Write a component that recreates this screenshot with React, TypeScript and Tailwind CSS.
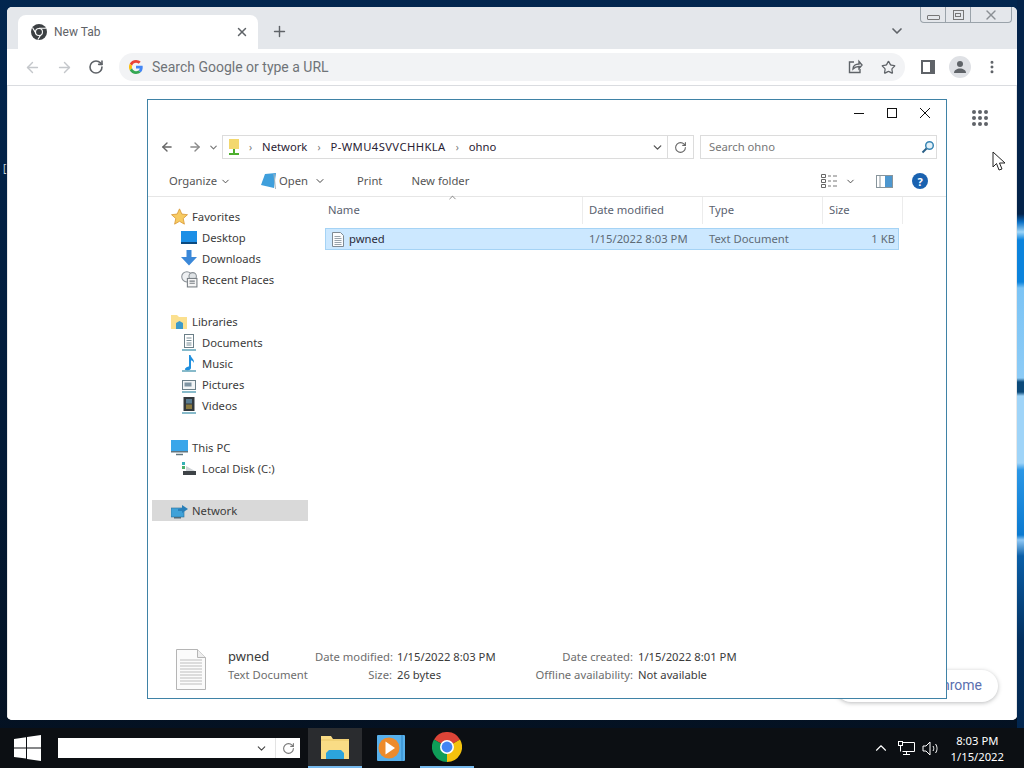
import { ArrowLeft, ArrowRight, ChevronDown, ChevronUp, MoreVertical, Plus, RotateCw, Star, X } from "lucide-react";
import type { ReactNode } from "react";

const ChromeLogo = ({ size }: { size: number }) => (
  <svg width={size} height={size} viewBox="0 0 30 30">
    <path d="M15 15 L2 7.5 A15 15 0 0 1 28 7.5 Z" fill="#db4437" />
    <path d="M15 15 L28 7.5 A15 15 0 0 1 15 30 Z" fill="#f4c20d" />
    <path d="M15 15 L15 30 A15 15 0 0 1 2 7.5 Z" fill="#0f9d58" />
    <circle cx="15" cy="15" r="7" fill="#fff" />
    <circle cx="15" cy="15" r="5.4" fill="#4285f4" />
  </svg>
);

const GrayChrome = () => (
  <svg width="16" height="16" viewBox="0 0 30 30">
    <circle cx="15" cy="15" r="15" fill="#3c4043" />
    <path d="M15 8 H28 M10 19 L3 7 M19 19 L13 29" stroke="#fff" strokeWidth="2" />
    <circle cx="15" cy="15" r="7.5" fill="#fff" />
    <circle cx="15" cy="15" r="5.5" fill="#3c4043" />
  </svg>
);

const GoogleG = () => (
  <svg width="14" height="14" viewBox="0 0 48 48">
    <path fill="#ea4335" d="M24 9.5c3.5 0 6.700 1.200 9.200 3.600l6.900-6.900C35.900 2.400 30.400 0 24 0 14.600 0 6.500 5.400 2.600 13.200l8 6.200C12.500 13.700 17.800 9.500 24 9.500z" />
    <path fill="#4285f4" d="M47 24.500c0-1.600-.2-3.100-.4-4.500H24v9h12.900c-.6 3-2.200 5.500-4.700 7.200l7.700 6C44.400 38 47 31.800 47 24.500z" />
    <path fill="#fbbc05" d="M10.500 28.600c-.5-1.400-.8-3-.8-4.600s.3-3.200.8-4.600l-8-6.200C.9 16.500 0 20.100 0 24s.9 7.500 2.600 10.800l7.900-6.200z" />
    <path fill="#34a853" d="M24 48c6.500 0 11.900-2.100 15.900-5.800l-7.700-6c-2.100 1.400-4.900 2.300-8.200 2.300-6.200 0-11.500-4.200-13.400-9.900l-8 6.200C6.500 42.600 14.600 48 24 48z" />
  </svg>
);

const NavIcon = ({ kind }: { kind: string }) => {
  switch (kind) {
    case "star":
      return (
        <svg width="17" height="17" viewBox="0 0 16 16">
          <path d="M8 .8l2.200 4.900 5.300.6-4 3.600 1.100 5.300L8 12.500l-4.600 2.700 1.100-5.300-4-3.600 5.300-.6z" fill="#f7cb62" stroke="#d99b3a" strokeWidth=".8" />
        </svg>
      );
    case "desktop":
      return (
        <svg width="16" height="16" viewBox="0 0 16 16">
          <rect x="0" y="1" width="16" height="12" fill="#1c8fe6" />
          <rect x="0" y="12" width="16" height="2" fill="#0b4a80" />
        </svg>
      );
    case "down":
      return (
        <svg width="16" height="17" viewBox="0 0 16 17">
          <path d="M5.500 0h5v7H16l-8 8.500L0 7h5.500z" fill="#3b88d8" />
        </svg>
      );
    case "recent":
      return (
        <svg width="17" height="17" viewBox="0 0 16 16">
          <circle cx="5.500" cy="5.500" r="4.800" fill="#eef0f2" stroke="#8a9096" />
          <circle cx="11" cy="5" r="3.500" fill="#dfe3e6" stroke="#8a9096" />
          <rect x="6" y="7" width="9" height="8" fill="#f5f5f5" stroke="#777d83" />
          <path d="M8 9.500h5M8 11.500h5" stroke="#777d83" />
        </svg>
      );
    case "lib":
      return (
        <svg width="17" height="16" viewBox="0 0 17 16">
          <path d="M0 1h6l2 2h8v12H0z" fill="#fbe08f" />
          <path d="M5 9l3.500-2L12 9v6H5z" fill="#3d9ac9" />
        </svg>
      );
    case "doc":
      return (
        <svg width="16" height="17" viewBox="0 0 16 17">
          <rect x="3.500" y=".5" width="9" height="13" fill="#fff" stroke="#6b7f88" />
          <path d="M5.500 4h5M5.500 6.500h5M5.500 9h5M5.500 11h5" stroke="#7b8f98" />
          <path d="M1 16h14" stroke="#5fa3b8" strokeWidth="1.500" />
        </svg>
      );
    case "music":
      return (
        <svg width="16" height="17" viewBox="0 0 16 17">
          <path d="M8 0h1.500c.5 3 4 4 3.500 8-1-2-2-2.500-3-2.500V13c0 2-3.500 3-5.500 2S6 11.500 8 11.500z" fill="#1f8fde" />
          <path d="M1 16h14" stroke="#5fa3b8" strokeWidth="1.500" />
        </svg>
      );
    case "pic":
      return (
        <svg width="16" height="17" viewBox="0 0 16 17">
          <rect x="1.500" y="4.500" width="13" height="9" fill="#f2f5f6" stroke="#6b7f88" />
          <rect x="3.500" y="6.500" width="7" height="4" fill="#7f95a3" />
          <path d="M1 16h14" stroke="#5fa3b8" strokeWidth="1.500" />
        </svg>
      );
    case "vid":
      return (
        <svg width="16" height="17" viewBox="0 0 16 17">
          <rect x="2.500" y="0" width="11" height="14" fill="#33383c" />
          <rect x="5" y="2" width="6" height="4.500" fill="#5a7d92" />
          <rect x="5" y="7.500" width="6" height="4.500" fill="#8a7a40" />
          <path d="M1 16h14" stroke="#5fa3b8" strokeWidth="1.500" />
        </svg>
      );
    case "pc":
      return (
        <svg width="17" height="16" viewBox="0 0 17 16">
          <rect x="0" y="0" width="17" height="11" fill="#3aa6ea" />
          <rect x="0" y="11" width="17" height="1.500" fill="#60757f" />
          <path d="M5 14.500h7" stroke="#60757f" strokeWidth="1.500" />
        </svg>
      );
    case "disk":
      return (
        <svg width="16" height="16" viewBox="0 0 16 16">
          <rect x="1" y="1" width="3" height="3" fill="#35b1b5" />
          <rect x="1" y="5" width="3" height="3" fill="#4caf6a" />
          <path d="M5 5l9 5H5z" fill="#cfd4d7" />
          <rect x="2" y="10" width="13" height="4" fill="#3e4347" />
        </svg>
      );
    default:
      return (
        <svg width="17" height="16" viewBox="0 0 17 16">
          <rect x="0" y="5" width="13" height="9" fill="#3fa1d8" stroke="#2a6f99" strokeWidth=".6" />
          <path d="M7 6l4-1V2l6 4-6 4V8H7z" fill="#2a7fb8" />
          <rect x="3" y="14" width="7" height="1.500" fill="#546a76" />
        </svg>
      );
  }
};

const NavGroup = ({ items }: { items: { label: string; icon: string; sub?: boolean; active?: boolean }[] }) => (
  <div className="flex flex-col">
    {items.map((item) => (
      <div
        key={item.label}
        className={`flex h-[21px] items-center ${item.sub ? "pl-[29px]" : "pl-[19px]"} ${item.active ? "bg-[#d9d9d9]" : ""}`}
      >
        <span className="flex w-[21px] shrink-0 items-center">
          <NavIcon kind={item.icon} />
        </span>
        <span className="whitespace-nowrap pt-[1px] text-[11.25px] text-[#3b3b3b]">{item.label}</span>
      </div>
    ))}
  </div>
);

const Crumb = ({ children, className }: { children: ReactNode; className?: string }) => (
  <>
    <span className="text-[10px] leading-none text-[#777]">›</span>
    <span className={`whitespace-nowrap text-[11.25px] text-[#2a2233] ${className ?? ""}`}>{children}</span>
  </>
);

const HeaderCell = ({ width, children, pad }: { width: string; children?: ReactNode; pad: string }) => (
  <div className={`${width} ${pad} flex h-[27px] shrink-0 items-center border-r border-[#ececec] text-[11.25px] text-[#5a6270]`}>
    {children}
  </div>
);

const Detail = ({ width, label, value }: { width: string; label: string; value: string }) => (
  <div className="flex items-center whitespace-nowrap">
    <span className={`${width} shrink-0 text-right text-[#6d6d6d]`}>{label}</span>
    <span className="ml-[5px] text-[#3b3b3b]">{value}</span>
  </div>
);

const Explorer = () => (
  <div className="absolute left-[140px] top-[92px] flex h-[600px] w-[800px] flex-col border border-[#3f82a6] bg-white [font-family:'Noto_Sans',sans-serif]">
    {/* caption */}
    <div className="flex h-[19px] shrink-0 items-end justify-end gap-[21px] pr-[15px]">
      <svg width="12" height="12" viewBox="0 0 12 12"><path d="M1 6.500h10" stroke="#111" /></svg>
      <svg width="12" height="12" viewBox="0 0 12 12"><rect x="1.500" y="1.500" width="9" height="9" fill="none" stroke="#111" /></svg>
      <svg width="12" height="12" viewBox="0 0 12 12"><path d="M1 1l10 10M11 1L1 11" stroke="#111" /></svg>
    </div>
    {/* address row */}
    <div className="mt-[16px] flex h-[24px] shrink-0 items-center pl-[12px] pr-[9px]">
      <ArrowLeft size={14} strokeWidth={2.4} className="text-[#666]" />
      <ArrowRight size={14} strokeWidth={2.4} className="ml-[14px] text-[#8a8a8a]" />
      <ChevronDown size={11} strokeWidth={2.5} className="ml-[6px] text-[#777]" />
      <div className="ml-[3px] flex h-[24px] w-[446px] items-center border border-[#dcdcdc] pl-[5px] pr-[3px]">
        <svg width="12" height="18" viewBox="0 0 12 18">
          <path d="M1 1h10v10H1z" fill="#f3d86e" />
          <path d="M6 11v4M1 16h10" stroke="#4caf2e" strokeWidth="2" />
        </svg>
        <div className="ml-[9px] flex items-center gap-[10px]">
          <Crumb>Network</Crumb>
          <Crumb className="tracking-[0.4px]">P-WMU4SVVCHHKLA</Crumb>
          <Crumb>ohno</Crumb>
        </div>
        <ChevronDown size={13} strokeWidth={2.5} className="ml-auto text-[#555]" />
      </div>
      <div className="flex h-[24px] w-[26px] items-center justify-center border-y border-r border-[#dcdcdc]">
        <RotateCw size={13} className="text-[#666]" />
      </div>
      <div className="ml-[6px] flex h-[24px] flex-1 items-center justify-between border border-[#dcdcdc] pl-[8px] pr-[1px]">
        <span className="text-[11.25px] text-[#777]">Search ohno</span>
        <svg width="14" height="14" viewBox="0 0 14 14">
          <circle cx="8.500" cy="5.500" r="3.800" fill="#e4f1f8" stroke="#3b87b5" strokeWidth="1.500" />
          <path d="M5.500 8.500L1.500 12.500" stroke="#2a5f86" strokeWidth="2" />
        </svg>
      </div>
    </div>
    {/* command bar */}
    <div className="mt-[5px] flex h-[33px] shrink-0 items-center whitespace-nowrap border-b border-[#e6e6e6] pl-[21px] pr-[18px] pt-[2px] text-[11.25px] text-[#555]">
      <span>Organize</span>
      <ChevronDown size={11} className="ml-[3px] text-[#444]" />
      <svg width="17" height="17" viewBox="0 0 17 17" className="ml-[29px]">
        <path d="M5 1l11-1-2 15L1 12z" fill="#3f9fdc" />
        <path d="M14 1l1.500 15" stroke="#a9b6bd" />
      </svg>
      <span className="ml-[2px]">Open</span>
      <ChevronDown size={12} className="ml-[6px] text-[#444]" />
      <span className="ml-[31px]">Print</span>
      <span className="ml-[29px]">New folder</span>
      <svg width="17" height="14" viewBox="0 0 17 14" className="ml-auto">
        <path d="M.5.500h4v3h-4zM.5 5.500h4v3h-4zM.5 10.500h4v3h-4z" fill="none" stroke="#666" />
        <path d="M7 2h3M12 2h4M7 7h3M12 7h4M7 12h3M12 12h4" stroke="#777" />
      </svg>
      <ChevronDown size={11} className="ml-[7px] text-[#444]" />
      <svg width="17" height="13" viewBox="0 0 17 13" className="ml-[20px]">
        <rect x=".5" y=".5" width="16" height="12" fill="#fff" stroke="#88959c" />
        <rect x="9" y="1" width="7" height="11" fill="#4d97cf" />
        <path d="M4 1v11" stroke="#88959c" />
      </svg>
      <span className="ml-[19px] flex h-[16px] w-[16px] items-center justify-center rounded-full bg-[#1a62b0] text-[11px] font-bold leading-none text-white">
        ?
      </span>
    </div>
    {/* body */}
    <div className="flex min-h-0 flex-1">
      <div className="flex w-[177px] shrink-0 flex-col gap-[21px] pl-[4px] pt-[9px]">
        <NavGroup
          items={[
            { label: "Favorites", icon: "star" },
            { label: "Desktop", icon: "desktop", sub: true },
            { label: "Downloads", icon: "down", sub: true },
            { label: "Recent Places", icon: "recent", sub: true },
          ]}
        />
        <NavGroup
          items={[
            { label: "Libraries", icon: "lib" },
            { label: "Documents", icon: "doc", sub: true },
            { label: "Music", icon: "music", sub: true },
            { label: "Pictures", icon: "pic", sub: true },
            { label: "Videos", icon: "vid", sub: true },
          ]}
        />
        <NavGroup
          items={[
            { label: "This PC", icon: "pc" },
            { label: "Local Disk (C:)", icon: "disk", sub: true },
          ]}
        />
        <div className="w-[156px]">
          <NavGroup items={[{ label: "Network", icon: "net", active: true }]} />
        </div>
      </div>
      <div className="relative flex-1">
        <ChevronUp size={11} strokeWidth={1.5} className="absolute left-[122px] top-[-5px] text-[#555]" />
        <div className="flex">
          <HeaderCell width="w-[258px]" pad="pl-[3px]">Name</HeaderCell>
          <HeaderCell width="w-[120px]" pad="pl-[6px]">Date modified</HeaderCell>
          <HeaderCell width="w-[120px]" pad="pl-[6px]">Type</HeaderCell>
          <HeaderCell width="w-[80px]" pad="pl-[6px]">Size</HeaderCell>
        </div>
        <div className="mt-[4px] flex h-[22px] w-[574px] items-center border border-[#a5d3f5] bg-[#cce8ff] text-[11.25px] text-[#5f6b76]">
          <svg width="14" height="15" viewBox="0 0 14 15" className="ml-[5px] shrink-0">
            <path d="M1.500.5h8l3 3v11h-11z" fill="#fbfcfd" stroke="#7f8a93" />
            <path d="M3.500 4.500h6M3.500 6.500h7M3.500 8.500h7M3.500 10.500h7M3.500 12.500h7" stroke="#99a3ab" />
          </svg>
          <span className="ml-[4px] w-[240px] shrink-0 text-[#2b2b3a]">pwned</span>
          <span className="w-[120px] shrink-0">1/15/2022 8:03 PM</span>
          <span className="w-[120px] shrink-0">Text Document</span>
          <span className="w-[66px] shrink-0 text-right">1 KB</span>
        </div>
      </div>
    </div>
    {/* details pane */}
    <div className="flex h-[58px] shrink-0 items-start pt-[8px] text-[11.25px]">
      <svg width="32" height="41" viewBox="0 0 32 41" className="ml-[27px] mt-[1px] shrink-0">
        <path d="M1.500.5h21l8 8v32h-29z" fill="#fbfbfb" stroke="#b5b5b5" />
        <path d="M22.500.5v8h8" fill="#eee" stroke="#b5b5b5" />
        <path d="M5 11h22M5 14h22M5 17h22M5 20h22M5 23h22M5 26h22M5 29h22M5 32h22M5 35h22" stroke="#bdbdbd" />
      </svg>
      <div className="ml-[21px] flex w-[87px] shrink-0 flex-col gap-[1px] whitespace-nowrap leading-[17px]">
        <span className="text-[13px] text-[#3b3b3b]">pwned</span>
        <span className="text-[#6d6d6d]">Text Document</span>
      </div>
      <div className="flex w-[220px] shrink-0 flex-col gap-[1px] leading-[17px]">
        <Detail width="w-[77px]" label="Date modified:" value="1/15/2022 8:03 PM" />
        <Detail width="w-[77px]" label="Size:" value="26 bytes" />
      </div>
      <div className="flex flex-col gap-[1px] leading-[17px]">
        <Detail width="w-[98px]" label="Date created:" value="1/15/2022 8:01 PM" />
        <Detail width="w-[98px]" label="Offline availability:" value="Not available" />
      </div>
    </div>
  </div>
);

const ChromeWindow = () => (
  <div className="relative flex h-[713px] w-[1010px] flex-col overflow-hidden rounded-[5px] bg-white [font-family:Roboto,sans-serif]">
    <div className="flex h-[42px] shrink-0 items-end bg-[#e4e7eb] pl-[11px]">
      <div className="flex h-[34px] w-[240px] items-center rounded-t-[8px] bg-white pl-[13px] pr-[9px]">
        <GrayChrome />
        <span className="ml-[7px] text-[12px] text-[#5f6368]">New Tab</span>
        <X size={14} strokeWidth={2.5} className="ml-auto text-[#5f6368]" />
      </div>
      <Plus size={17} strokeWidth={2} className="mb-[9px] ml-[13px] text-[#5f6368]" />
      <ChevronDown size={16} strokeWidth={2.5} className="mb-[10px] ml-[601px] text-[#5f6368]" />
    </div>
    {/* basic theme caption buttons */}
    <div className="absolute right-[5px] top-0 flex h-[16px] w-[92px] rounded-b-[4px] border border-t-0 border-[#9aa3aa]">
      <div className="flex w-[25px] items-end justify-center border-r border-[#9aa3aa] pb-[2px]">
        <span className="h-[5px] w-[13px] rounded-[1px] border border-[#777]" />
      </div>
      <div className="flex w-[25px] items-center justify-center border-r border-[#9aa3aa]">
        <span className="flex h-[10px] w-[11px] items-center justify-center border border-[#777]">
          <span className="h-[4px] w-[6px] border border-[#777]" />
        </span>
      </div>
      <div className="flex flex-1 items-center justify-center">
        <X size={16} strokeWidth={2} className="text-[#8a8f94]" />
      </div>
    </div>
    <div className="flex h-[37px] shrink-0 items-center border-b border-[#dadce0] pl-[17px] pr-[17px]">
      <ArrowLeft size={17} className="text-[#c4c7cb]" />
      <ArrowRight size={17} className="ml-[15px] text-[#c4c7cb]" />
      <RotateCw size={16} strokeWidth={2.4} className="ml-[15px] text-[#5f6368]" />
      <div className="ml-[15px] flex h-[28px] w-[787px] items-center rounded-full bg-[#f2f3f5] pl-[10px] pr-[9px]">
        <GoogleG />
        <span className="ml-[9px] text-[14px] text-[#6f7378]">Search Google or type a URL</span>
        <svg width="16" height="16" viewBox="0 0 16 16" className="ml-auto" fill="none" stroke="#5f6368" strokeWidth="1.400">
          <path d="M7 3H2.500v10.500H13V10" />
          <path d="M6 10c0-3 2.500-5 6-5V2.500L15 6l-3 3.500V7.500c-2.500 0-4.500 1-6 2.500z" />
        </svg>
        <Star size={15} strokeWidth={2} className="ml-[18px] text-[#5f6368]" />
      </div>
      <svg width="14" height="14" viewBox="0 0 14 14" className="ml-[16px]">
        <rect x="0" y="0" width="14" height="14" fill="#5f6368" />
        <rect x="2" y="2" width="7" height="10" fill="#fff" />
      </svg>
      <span className="ml-[14px] flex h-[22px] w-[22px] items-center justify-center rounded-full bg-[#dfe1e5]">
        <svg width="14" height="14" viewBox="0 0 14 14">
          <circle cx="7" cy="4" r="3" fill="#5f6368" />
          <path d="M1 13c0-3 3-4.500 6-4.500s6 1.500 6 4.500z" fill="#5f6368" />
        </svg>
      </span>
      <MoreVertical size={16} strokeWidth={2.5} className="ml-[13px] text-[#5f6368]" />
    </div>
    <div className="relative flex-1 border-x border-[#e8e8e8] bg-white" />
    <div className="absolute left-[965px] top-[103px] grid grid-cols-3 gap-[2px]">
      {Array.from({ length: 9 }).map((_, i) => (
        <span key={i} className="h-[4px] w-[4px] rounded-full bg-[#5f6368]" />
      ))}
    </div>
    <div className="absolute left-[828px] top-[663px] flex h-[32px] w-[163px] items-center justify-end rounded-full bg-white pb-[1px] pr-[16px] text-[14px] text-[#5b6fb0] shadow-[0_1px_4px_rgba(60,64,67,0.35)]">
      Customize Chrome
    </div>
    <Explorer />
    <svg width="15" height="21" viewBox="0 0 15 21" className="absolute left-[985px] top-[144px]">
      <path d="M1 1v15l3.500-3.500L7 19l3-1-2.500-6H13z" fill="#fff" stroke="#222" />
    </svg>
  </div>
);

const Taskbar = () => (
  <div className="flex h-[40px] shrink-0 items-center bg-[#0c0f13] [font-family:'Noto_Sans',sans-serif]">
    <svg width="27" height="26" viewBox="0 0 27 26" className="ml-[14px] shrink-0">
      <path d="M0 4l12-1.700V12.500H0zM13 2.100L27 0v12.500H13zM0 13.500h12v10L0 22zM13 13.500h14V26l-14-2z" fill="#fff" />
    </svg>
    <div className="ml-[17px] flex h-[20px] w-[242px] shrink-0 items-center justify-end bg-white">
      <ChevronDown size={13} strokeWidth={2} className="mr-[7px] text-[#444]" />
      <div className="flex h-full w-[25px] items-center justify-center border-l border-[#e3e3e3]">
        <RotateCw size={13} className="text-[#777]" />
      </div>
    </div>
    <div className="ml-[8px] flex h-[40px] w-[54px] shrink-0 items-center justify-center border-b-2 border-[#76b9ed] bg-[#2a2c2f]">
      <svg width="28" height="24" viewBox="0 0 28 24">
        <path d="M0 1h10l2 3h16v20H0z" fill="#f9dc85" />
        <path d="M0 5h28" stroke="#e8c566" />
        <path d="M5 24v-6l3-3h12l3 3v6z" fill="#2ca4dd" />
      </svg>
    </div>
    <div className="ml-[15px] flex h-[40px] w-[28px] shrink-0 items-center justify-center">
      <svg width="28" height="26" viewBox="0 0 28 26">
        <rect x="0" y="0" width="28" height="26" rx="1" fill="#58b0ea" />
        <path d="M25 0v26" stroke="#2f86c7" />
        <circle cx="12" cy="13" r="10.500" fill="#ed8b2c" />
        <path d="M8.500 6.500L18 13l-9.500 6.500z" fill="#fff" />
      </svg>
    </div>
    <div className="ml-[15px] flex h-[40px] w-[54px] shrink-0 items-center justify-center border-b-2 border-[#76b9ed]">
      <ChromeLogo size={30} />
    </div>
    <div className="ml-auto flex items-center text-white">
      <ChevronUp size={18} strokeWidth={1.5} />
      <svg width="17" height="15" viewBox="0 0 17 15" className="ml-[8px]" fill="none" stroke="#fff">
        <path d="M4.500 1.500h12v9h-12M8.500 10.500v3M5 13.500h7" />
        <rect x=".5" y=".5" width="4" height="4" />
        <path d="M2.500 4.500v6" />
      </svg>
      <svg width="18" height="15" viewBox="0 0 18 15" className="ml-[7px]" fill="none" stroke="#fff">
        <path d="M1 5h3l4-4v13l-4-4H1z" />
        <path d="M11 5c1 1.500 1 3.500 0 5M13.500 3c2 2.500 2 6.500 0 9" />
      </svg>
      <div className="ml-[11px] mr-[20px] flex flex-col items-center pt-[2px] text-[11.25px] leading-[16px]">
        <span>8:03 PM</span>
        <span>1/15/2022</span>
      </div>
    </div>
  </div>
);

export default function App() {
  return (
    <div className="relative flex h-[768px] w-[1024px] flex-col overflow-hidden bg-[linear-gradient(180deg,#02264f_0%,#021a36_60%,#04101f_100%)]">
      <div className="absolute bottom-[40px] right-0 top-0 w-[7px] bg-[linear-gradient(180deg,#03234a_0px,#03234a_214px,#0a6fc4_222px,#9fd6f8_232px,#0b83dc_240px,#0b83dc_282px,#7cc4f5_288px,#8ccbf6_378px,#0b4a7a_382px,#0b4a7a_392px,#9fd4f8_396px,#9fd4f8_463px,#2b97e6_470px,#0b7ad0_535px,#8fc8f5_540px,#0a5fa8_556px,#03305f_640px,#02264f_728px)]" />
      <span className="absolute left-[3px] top-[163px] text-[10px] leading-none text-[#cfd6dd]">[</span>
      <div className="relative flex-1 pl-[7px] pt-[7px]">
        <ChromeWindow />
      </div>
      <Taskbar />
    </div>
  );
}
